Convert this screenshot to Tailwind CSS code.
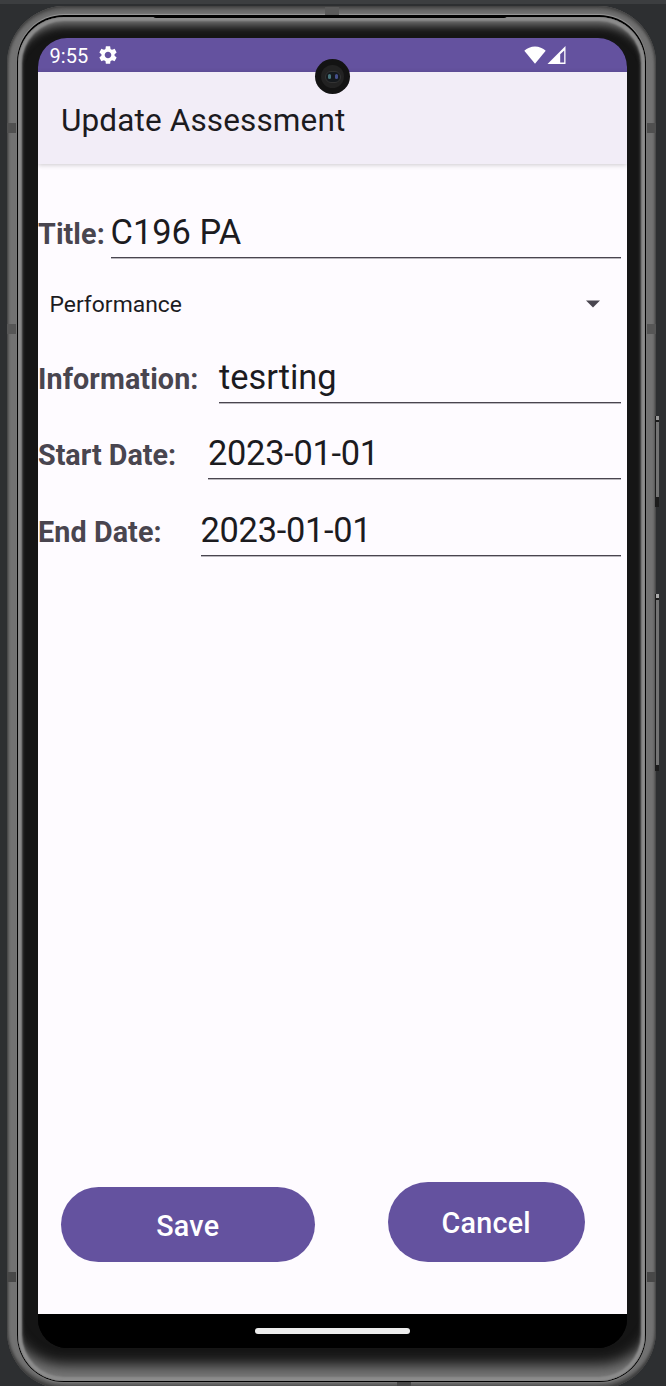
<!DOCTYPE html>
<html lang="en">
<head>
<meta charset="utf-8">
<title>Update Assessment</title>
<script src="https://cdn.jsdelivr.net/npm/@tailwindcss/browser@4"></script>
</head>
<body class="bg-[#2d2f31]">
<div class="relative w-[666px] h-[1386px] overflow-hidden bg-[#2d2f31] border-t-4 border-[#3c3e40] font-['Roboto',sans-serif] text-[#1c1b1f]">
  <!-- side buttons -->
  <div class="absolute left-[655px] top-[412px] w-[4px] h-[91px] bg-[#1c1c1c]"></div>
  <div class="absolute left-[656px] top-[412px] w-[3px] h-[4px] bg-[#999]"></div>
  <div class="absolute left-[656px] top-[418px] w-[3px] h-[75px] bg-[#737373]"></div>
  <div class="absolute left-[655px] top-[590px] w-[4px] h-[177px] bg-[#1c1c1c]"></div>
  <div class="absolute left-[656px] top-[590px] w-[3px] h-[4px] bg-[#aaa]"></div>
  <div class="absolute left-[656px] top-[596px] w-[3px] h-[165px] bg-[#737373]"></div>

  <!-- metal frame -->
  <div class="ml-[7px] mt-[2px] w-[649px] h-[1383px] rounded-[58px] pt-[9px] px-[10px] bg-[#727272] shadow-[inset_0_0_3px_1px_#3a3a3a,inset_0_7px_4px_-3px_#555,inset_0_-6px_4px_-2px_#444]">
    <div class="w-[629px] h-[1367px] rounded-[47px] bg-black pt-[2px] px-[1px] shadow-[0_-1px_1px_0_#999,0_1px_1px_0_#777]">
      <div class="w-[627px] h-[1364px] rounded-[46px] bg-[#151515] pt-[21px] pl-[20px] shadow-[inset_0_0_1px_0_#555,inset_0_0_2px_4px_#8c8c8c,inset_0_15px_9px_-6px_#6c6c6c,inset_0_-28px_14px_-12px_#777,inset_0_0_4px_4px_#444]">
        <!-- screen -->
        <div class="relative w-[589px] h-[1310px] rounded-[29px] overflow-hidden bg-black flex flex-col">
          <div class="h-[34px] shrink-0 bg-[#64529f] flex items-center pl-[11.5px] pr-[61px] text-white">
            <span class="text-[20px] leading-[34px] pt-[2px] tracking-[0.1px]">9:55</span>
            <svg class="ml-[8.5px] w-[22px] h-[22px]" viewBox="0 0 24 24" fill="#fff"><path d="M19.14 12.94c.04-.3.06-.61.06-.94 0-.32-.02-.64-.07-.94l2.03-1.58c.18-.14.23-.41.12-.61l-1.92-3.32c-.12-.22-.37-.29-.59-.22l-2.39.96c-.5-.38-1.03-.7-1.62-.94l-.36-2.54c-.04-.24-.24-.41-.48-.41h-3.84c-.24 0-.43.17-.47.41l-.36 2.54c-.59.24-1.13.57-1.62.94l-2.39-.96c-.22-.08-.47 0-.59.22L2.74 8.87c-.12.21-.08.47.12.61l2.03 1.58c-.05.3-.09.63-.09.94s.02.64.07.94l-2.03 1.58c-.18.14-.23.41-.12.61l1.92 3.32c.12.22.37.29.59.22l2.39-.96c.5.38 1.03.7 1.62.94l.36 2.54c.05.24.24.41.48.41h3.84c.24 0 .44-.17.47-.41l.36-2.54c.59-.24 1.13-.56 1.62-.94l2.39.96c.22.08.47 0 .59-.22l1.92-3.32c.12-.22.07-.47-.12-.61l-2.01-1.58zM12 15.6c-1.98 0-3.6-1.62-3.6-3.6s1.62-3.6 3.6-3.6 3.6 1.62 3.6 3.6-1.62 3.6-3.6 3.6z"/></svg>
            <svg class="ml-auto w-[22px] h-[18px]" viewBox="0 0 22 18" fill="#fff"><path d="M.3 4.7C3 2 7 .4 11 .4S19 2 21.700 4.700L11 17.700z"/></svg>
            <svg class="ml-[1px] w-[19px] h-[18px]" viewBox="0 0 19 18"><path fill="#fff" fill-rule="evenodd" d="M18.500 0V18H.5zM17.200 4.600L13.200 8.200V16.400H17.200z"/></svg>
          </div>
          <div class="relative z-10 h-[92px] shrink-0 bg-[#f2edf7] shadow-[0_1px_5px_rgba(0,0,0,0.2)] pl-[23px] text-[31.5px] leading-[97px] tracking-[0.13px] whitespace-nowrap">Update Assessment</div>

          <div class="grow bg-[#fefbff] flex flex-col">
            <div class="mt-[42px] flex h-[52px] shrink-0 pr-[6px] whitespace-nowrap">
              <div class="w-[72.500px] shrink-0 text-[28.7px] font-bold leading-[56px] tracking-[0.1px] text-[#49454f]">Title:</div>
              <div class="grow border-b border-[#49454f] shadow-[0_1px_0_#bab7bd] text-[34.4px] leading-[52px]">C196 PA</div>
            </div>
            <div class="h-[93px] shrink-0 flex items-center justify-between pl-[11.5px] pr-[27px] text-[22.900px]">
              <span class="pt-[2px]">Performance</span>
              <svg class="-mt-[2px] w-[14px] h-[8px]" viewBox="0 0 14 8"><path fill="#49454f" d="M0 .5h14L7 7.500z"/></svg>
            </div>
            <div class="flex h-[52px] shrink-0 pr-[6px] whitespace-nowrap">
              <div class="w-[181px] shrink-0 text-[28.7px] font-bold leading-[56px] tracking-[0.1px] text-[#49454f]">Information:</div>
              <div class="grow border-b border-[#49454f] shadow-[0_1px_0_#bab7bd] text-[34.4px] leading-[52px]">tesrting</div>
            </div>
            <div class="mt-[24px] flex h-[52px] shrink-0 pr-[6px] whitespace-nowrap">
              <div class="w-[170px] shrink-0 text-[28.7px] font-bold leading-[56px] text-[#49454f]">Start Date:</div>
              <div class="grow border-b border-[#49454f] shadow-[0_1px_0_#bab7bd] text-[34.4px] leading-[53px] tracking-[-0.28px]">2023-01-01</div>
            </div>
            <div class="mt-[25px] flex h-[52px] shrink-0 pr-[6px] whitespace-nowrap">
              <div class="w-[162.500px] shrink-0 text-[28.7px] font-bold leading-[56px] tracking-[0.1px] text-[#49454f]">End Date:</div>
              <div class="grow border-b border-[#49454f] shadow-[0_1px_0_#bab7bd] text-[34.4px] leading-[52px] tracking-[-0.28px]">2023-01-01</div>
            </div>

            <div class="mt-auto mb-[52px] flex items-end justify-between pl-[23px] pr-[42px] text-[28.7px] font-medium tracking-[0.25px] text-white">
              <button class="w-[253.5px] h-[75px] rounded-full bg-[#64529f] pt-[4px]">Save</button>
              <button class="w-[197.5px] h-[80px] rounded-[40px] bg-[#64529f] pt-[4px]">Cancel</button>
            </div>
          </div>
          <div class="h-[34px] shrink-0 bg-black flex items-center justify-center">
            <div class="w-[155px] h-[6px] rounded-full bg-[#ececec]"></div>
          </div>
          <!-- front camera -->
          <div class="absolute z-20 left-[277px] top-[21px] size-[35px] rounded-full bg-[#131313] flex items-center justify-center">
            <div class="size-[23px] rounded-full bg-[#222] flex items-center justify-center">
              <div class="w-[16px] h-[12px] rounded-full bg-[#15191d] flex items-center justify-between px-[2px] border border-[#333]">
                <div class="w-[3px] h-[5px] rounded-full bg-[#47757b]"></div>
                <div class="w-[3px] h-[5px] rounded-full bg-[#454f8a]"></div>
              </div>
            </div>
          </div>
        </div>
      </div>
    </div>
  </div>

  <!-- antenna bands -->
  <div class="absolute left-[7px] top-[119px] w-[9px] h-[10px] bg-[#505050]"></div>
  <div class="absolute left-[7px] top-[320px] w-[9px] h-[10px] bg-[#565656]"></div>
  <div class="absolute left-[7px] top-[1268px] w-[9px] h-[10px] bg-[#484848]"></div>
  <div class="absolute left-[647px] top-[119px] w-[9px] h-[10px] bg-[#505050]"></div>
  <div class="absolute left-[647px] top-[320px] w-[9px] h-[10px] bg-[#565656]"></div>
  <div class="absolute left-[647px] top-[1268px] w-[9px] h-[10px] bg-[#484848]"></div>
  <div class="absolute left-[325px] top-[3px] w-[14px] h-[8px] bg-[#5a5a5a]"></div>
  <div class="absolute left-[397px] top-[1378px] w-[14px] h-[4px] bg-[#484848]"></div>
  <!-- earpiece -->
  <div class="absolute left-[153px] top-[11px] w-[354px] h-[3px] rounded-b-full bg-black"></div>
</div>
</body>
</html>
